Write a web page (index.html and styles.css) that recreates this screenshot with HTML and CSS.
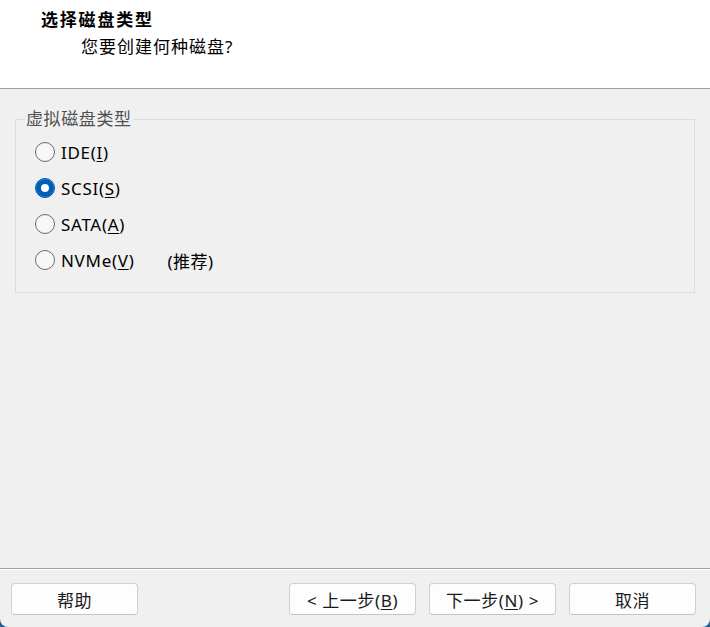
FILE: index.html
```html
<!DOCTYPE html>
<html lang="zh-CN">
<head>
	<meta charset="UTF-8">
	<title>新建虚拟机向导</title>
	<link rel="stylesheet" href="styles.css">
</head>
<body>
	<div id="wizard">
		<div class="head">
			<h1 class="title">选择磁盘类型</h1>
			<p class="subtitle">您要创建何种磁盘?</p>
		</div>

		<div class="main">
			<fieldset class="group">
				<legend>虚拟磁盘类型</legend>
				<label class="opt"><input type="radio" name="disk"><span>IDE(<u>I</u>)</span></label>
				<label class="opt"><input type="radio" name="disk" checked><span>SCSI(<u>S</u>)</span></label>
				<label class="opt"><input type="radio" name="disk"><span>SATA(<u>A</u>)</span></label>
				<label class="opt"><input type="radio" name="disk"><span>NVMe(<u>V</u>)</span><span class="hint">(推荐)</span></label>
			</fieldset>
		</div>

		<div class="foot">
			<button class="btn">帮助</button>
			<span class="fill"></span>
			<button class="btn">&lt; 上一步(<u>B</u>)</button>
			<button class="btn">下一步(<u>N</u>) &gt;</button>
			<button class="btn">取消</button>
		</div>
	</div>
</body>
</html>
```

FILE: styles.css
```css
*{
	margin: 0;
	padding: 0;
	box-sizing: border-box;
}
html, body{
	height: 100%;
}
body{
	background: #2d5e8c;
	font-family: "Noto Sans", "Noto Sans CJK SC", sans-serif;
	font-size: 17px;
	color: #000;
}
u{
	text-decoration-thickness: 1px;
	text-underline-offset: 2px;
}

#wizard{
	height: 627px;
	background: #f0f0f0;
	border-radius: 0 0 8px 8px;
	overflow: hidden;
	display: flex;
	flex-direction: column;
}

/* 顶部标题 */
.head{
	height: 89px;
	background: #fff;
	border-bottom: 1px solid #a0a0a0;
	padding: 8px 0 0 41px;
}
.title{
	font-size: 17px;
	font-weight: bold;
	letter-spacing: 1.8px;
	line-height: 24px;
}
.subtitle{
	margin: 3px 0 0 40px;
	letter-spacing: 1px;
	line-height: 24px;
}

/* 分组框 */
.main{
	flex: 1;
	padding: 20px 15px 0 15px;
}
.group{
	border: 1px solid #dcdcdc;
	height: 184px;
	padding: 5px 0 0 19px;
	display: flex;
	flex-direction: column;
}
.group legend{
	margin-left: -10px;
	padding: 0 1px;
	color: #505050;
	letter-spacing: 0.6px;
	line-height: 20px;
}
.opt{
	display: flex;
	align-items: center;
	height: 36px;
	gap: 6px;
	letter-spacing: 0.7px;
}
.opt input{
	appearance: none;
	width: 20px;
	height: 20px;
	border: 1px solid #6a6a6a;
	border-radius: 50%;
	background: #f7f7f7;
	margin: 0;
}
.opt input:checked{
	background: #005fb8;
	border-color: #005fb8;
	box-shadow: inset 0 0 0 5px #005fb8, inset 0 0 0 10px #fff;
}
.hint{
	margin-left: 27px;
	letter-spacing: 0.5px;
}

/* 底部按钮 */
.foot{
	height: 59px;
	border-top: 1px solid #a0a0a0;
	box-shadow: inset 0 1px 0 #fff;
	display: flex;
	align-items: flex-start;
	padding: 14px 14px 0 11px;
	gap: 13px;
}
.fill{
	flex: 1;
}
.btn{
	width: 127px;
	height: 32px;
	background: #fdfdfd;
	border: 1px solid #d0d0d0;
	border-bottom-color: #c4c4c4;
	border-radius: 4px;
	font: inherit;
	letter-spacing: 0.6px;
	color: #1a1a1a;
}
```
